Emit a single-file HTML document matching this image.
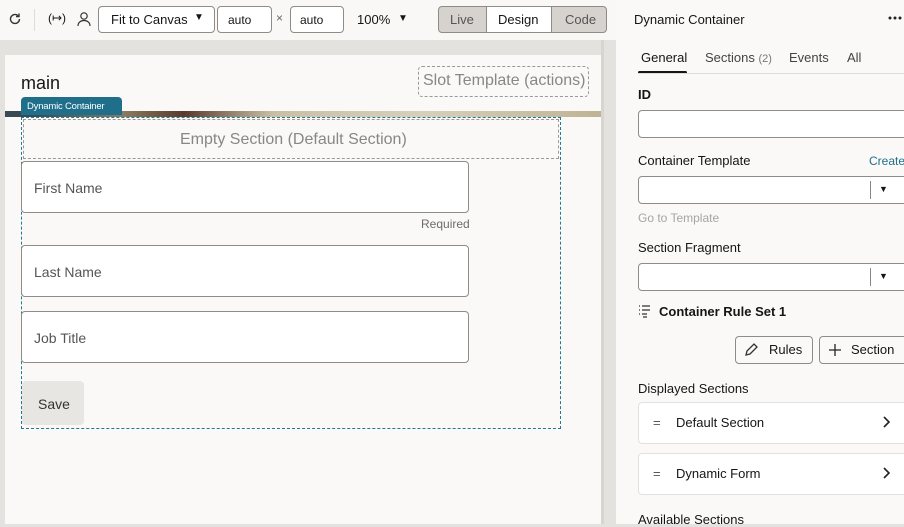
<!DOCTYPE html>
<html><head><style>
*{box-sizing:border-box;margin:0;padding:0}
body{width:904px;height:524px;overflow:hidden;font-family:"Liberation Sans",sans-serif;background:#e4e2de;position:relative;color:#161513}
.a{position:absolute}
.box{position:absolute;border:1px solid #8f8b86;border-radius:4px;background:#fff}
.t{position:absolute;white-space:nowrap}
</style></head><body>
<div class="a" style="left:0;top:0;width:616px;height:40px;background:#f9f8f6"></div>
<svg class="a" style="left:8px;top:12px" width="14" height="14" viewBox="0 0 14 14"><path d="M11.5 7a4.5 4.5 0 1 1-1.4-3.3" fill="none" stroke="#333" stroke-width="1.4"/><path d="M11 1.5v3h-3" fill="none" stroke="#333" stroke-width="1.4"/></svg>
<div class="a" style="left:34px;top:9px;width:1px;height:22px;background:#ddd"></div>
<div class="t" style="left:48px;top:11px;font-size:12px">(↦)</div>
<svg class="a" style="left:77px;top:11px" width="14" height="16" viewBox="0 0 14 16"><circle cx="7" cy="5" r="3.2" fill="none" stroke="#333" stroke-width="1.2"/><path d="M1 15c0-3.5 2.7-5.5 6-5.5s6 2 6 5.5" fill="none" stroke="#333" stroke-width="1.2"/></svg>
<div class="box" style="left:98px;top:6px;width:117px;height:27px"></div>
<div class="t" style="left:111px;top:12px;font-size:13px">Fit to Canvas</div>
<div class="t" style="left:194px;top:12px;font-size:10px">▼</div>
<div class="box" style="left:217px;top:6px;width:55px;height:27px"></div>
<div class="t" style="left:228px;top:13px;font-size:12px">auto</div>
<div class="t" style="left:276px;top:11px;font-size:12px;color:#666">×</div>
<div class="box" style="left:290px;top:6px;width:54px;height:27px"></div>
<div class="t" style="left:300px;top:13px;font-size:12px">auto</div>
<div class="t" style="left:357px;top:12px;font-size:13px">100%</div>
<div class="t" style="left:398px;top:13px;font-size:10px">▼</div>
<div class="box" style="left:438px;top:6px;width:169px;height:27px;background:#d6d3cf"></div>
<div class="a" style="left:486px;top:7px;width:66px;height:25px;background:#fff;border-left:1px solid #8f8b86;border-right:1px solid #8f8b86"></div>
<div class="t" style="left:450px;top:12px;font-size:13px;color:#555">Live</div>
<div class="t" style="left:498px;top:12px;font-size:13px">Design</div>
<div class="t" style="left:565px;top:12px;font-size:13px;color:#555">Code</div>
<div class="a" style="left:5px;top:55px;width:596px;height:469px;background:#faf9f8"></div>
<div class="a" style="left:601px;top:40px;width:3px;height:484px;background:#d8d5d0"></div>
<div class="t" style="left:21px;top:73px;font-size:18px">main</div>
<div class="a" style="left:418px;top:66px;width:171px;height:31px;border:1px dashed #999;border-radius:4px"></div>
<div class="t" style="left:423px;top:72px;font-size:16px;color:#8a8683">Slot Template (actions)</div>
<div class="a" style="left:5px;top:111px;width:596px;height:6px;background:linear-gradient(90deg,#3a4a52 0,#3a4a52 5%,#8a7a60 20%,#5a3a2a 30%,#c9bfa5 45%,#d8cfb8 70%,#bfb395 100%)"></div>
<div class="a" style="left:21px;top:97px;width:101px;height:18px;background:#1f6f8b;border-radius:4px 4px 0 0"></div>
<div class="t" style="left:27px;top:101px;font-size:9.5px;color:#fff;letter-spacing:-0.2px">Dynamic Container</div>
<div class="a" style="left:21px;top:117px;width:540px;height:312px;border:1px dashed #1f7a96"></div>
<div class="a" style="left:23px;top:119px;width:536px;height:40px;border:1px dashed #999"></div>
<div class="t" style="left:180px;top:131px;font-size:16px;color:#8a8683">Empty Section (Default Section)</div>
<div class="box" style="left:21px;top:161px;width:448px;height:52px"></div>
<div class="t" style="left:34px;top:180px;font-size:14px;color:#555">First Name</div>
<div class="t" style="left:421px;top:217px;font-size:12px;color:#6f6b67">Required</div>
<div class="box" style="left:21px;top:245px;width:448px;height:52px"></div>
<div class="t" style="left:34px;top:264px;font-size:14px;color:#555">Last Name</div>
<div class="box" style="left:21px;top:311px;width:448px;height:52px"></div>
<div class="t" style="left:34px;top:330px;font-size:14px;color:#555">Job Title</div>
<div class="a" style="left:22px;top:381px;width:62px;height:44px;background:#e8e6e3;border-radius:4px"></div>
<div class="t" style="left:38px;top:396px;font-size:14px;color:#333">Save</div>
<div class="a" style="left:616px;top:0;width:288px;height:524px;background:#faf9f8"></div>
<div class="t" style="left:634px;top:12px;font-size:13px">Dynamic Container</div>
<svg class="a" style="left:888px;top:16px" width="16" height="4"><circle cx="2" cy="2" r="1.5" fill="#222"/><circle cx="7" cy="2" r="1.5" fill="#222"/><circle cx="12" cy="2" r="1.5" fill="#222"/></svg>
<div class="t" style="left:641px;top:50px;font-size:13px">General</div>
<div class="a" style="left:638px;top:71px;width:49px;height:3px;background:#161513;border-radius:2px"></div>
<div class="a" style="left:638px;top:73px;width:266px;height:1px;background:#ddd"></div>
<div class="t" style="left:705px;top:50px;font-size:13px;color:#444">Sections <span style="font-size:11px;color:#777">(2)</span></div>
<div class="t" style="left:789px;top:50px;font-size:13px;color:#444">Events</div>
<div class="t" style="left:847px;top:50px;font-size:13px;color:#444">All</div>
<div class="t" style="left:638px;top:87px;font-size:13px;font-weight:bold">ID</div>
<div class="box" style="left:638px;top:110px;width:280px;height:28px"></div>
<div class="t" style="left:638px;top:153px;font-size:13px">Container Template</div>
<div class="t" style="left:869px;top:154px;font-size:12px;color:#1f6f8b">Create</div>
<div class="box" style="left:638px;top:176px;width:280px;height:28px"></div>
<div class="a" style="left:870px;top:181px;width:1px;height:18px;background:#888"></div>
<div class="t" style="left:879px;top:184px;font-size:9px">▼</div>
<div class="t" style="left:638px;top:211px;font-size:12px;color:#a8a4a0">Go to Template</div>
<div class="t" style="left:638px;top:240px;font-size:13px">Section Fragment</div>
<div class="box" style="left:638px;top:263px;width:280px;height:28px"></div>
<div class="a" style="left:870px;top:268px;width:1px;height:18px;background:#888"></div>
<div class="t" style="left:879px;top:271px;font-size:9px">▼</div>
<svg class="a" style="left:638px;top:304px" width="14" height="14" viewBox="0 0 14 14"><path d="M1 2h1M1 6h1M1 10h1M4 2h8M4 6h8M4 10h5M5 13h4" stroke="#333" stroke-width="1.3"/></svg>
<div class="t" style="left:659px;top:304px;font-size:13px;font-weight:bold">Container Rule Set 1</div>
<div class="box" style="left:735px;top:336px;width:78px;height:28px;background:#faf9f8"></div>
<svg class="a" style="left:744px;top:342px" width="15" height="15" viewBox="0 0 15 15"><path d="M2 13l1-4 7-7 3 3-7 7z" fill="none" stroke="#333" stroke-width="1.3"/></svg>
<div class="t" style="left:769px;top:342px;font-size:13px">Rules</div>
<div class="box" style="left:819px;top:336px;width:90px;height:28px;background:#faf9f8"></div>
<svg class="a" style="left:828px;top:343px" width="14" height="14"><path d="M7 1v12M1 7h12" stroke="#222" stroke-width="1.3"/></svg>
<div class="t" style="left:851px;top:342px;font-size:13px">Section</div>
<div class="t" style="left:638px;top:381px;font-size:13px">Displayed Sections</div>
<div class="a" style="left:638px;top:402px;width:280px;height:42px;background:#fff;border:1px solid #e3e1de;border-radius:4px"></div>
<div class="t" style="left:653px;top:415px;font-size:13px;color:#555">=</div>
<div class="t" style="left:676px;top:415px;font-size:13px">Default Section</div>
<svg class="a" style="left:882px;top:416px" width="8" height="12"><path d="M2 1l5 5-5 5" fill="none" stroke="#222" stroke-width="1.6"/></svg>
<div class="a" style="left:638px;top:453px;width:280px;height:42px;background:#fff;border:1px solid #e3e1de;border-radius:4px"></div>
<div class="t" style="left:653px;top:466px;font-size:13px;color:#555">=</div>
<div class="t" style="left:676px;top:466px;font-size:13px">Dynamic Form</div>
<svg class="a" style="left:882px;top:467px" width="8" height="12"><path d="M2 1l5 5-5 5" fill="none" stroke="#222" stroke-width="1.6"/></svg>
<div class="t" style="left:638px;top:512px;font-size:13px">Available Sections</div>
</body></html>
